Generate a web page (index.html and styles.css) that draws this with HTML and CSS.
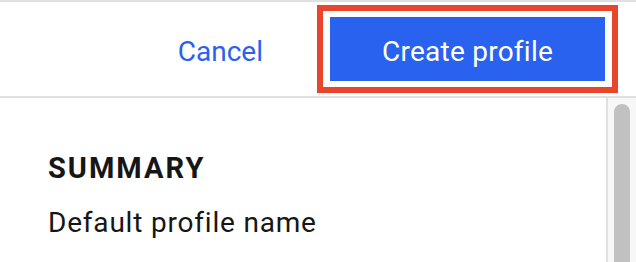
FILE: index.html
```html
<!DOCTYPE html>
<html lang="en">
<head>
<meta charset="utf-8">
<title>Create profile</title>
<link rel="stylesheet" href="styles.css">
</head>
<body>
<div class="page">
  <header class="header">
    <button class="btn-ghost" type="button">Cancel</button>
    <div class="highlight">
      <button class="btn-primary" type="button">Create profile</button>
    </div>
  </header>
  <div class="body">
    <main class="content">
      <h2 class="title">SUMMARY</h2>
      <p class="label">Default profile name</p>
    </main>
    <div class="scrollbar"><div class="thumb"></div></div>
  </div>
</div>
</body>
</html>
```

FILE: styles.css
```css
html, body {
  margin: 0;
  padding: 0;
  background: #ffffff;
}
body {
  font-family: Roboto, "Liberation Sans", sans-serif;
  color: #161616;
}
.page {
  width: 636px;
  height: 262px;
  overflow: hidden;
}
.header {
  box-sizing: border-box;
  height: 98px;
  border-top: 2px solid #e0e0e0;
  border-bottom: 2px solid #e0e0e0;
  display: flex;
  align-items: center;
  justify-content: flex-end;
  padding-right: 18px;
}
.btn-ghost,
.btn-primary {
  box-sizing: border-box;
  height: 64px;
  border: none;
  margin: 0;
  font-family: Roboto, "Liberation Sans", sans-serif;
  font-size: 28px;
  font-weight: 400;
  line-height: 59px;
  padding-top: 5px;
  padding-bottom: 0;
  cursor: pointer;
}
.btn-ghost {
  background: transparent;
  color: #2962ef;
  padding-left: 0;
  padding-right: 0;
  margin-right: 54px;
}
.highlight {
  border: 6px solid #e9442c;
  padding: 6px 7px;
  display: flex;
}
.btn-primary {
  width: 275px;
  background: #2962ef;
  color: #ffffff;
  text-align: center;
  padding-left: 0;
  padding-right: 0;
  letter-spacing: 0.25px;
}
.body {
  display: flex;
  height: 164px;
}
.content {
  flex: 1;
  padding: 52px 0 0 48px;
}
.title {
  margin: 0;
  font-size: 29px;
  font-weight: 700;
  line-height: 36px;
  letter-spacing: 2px;
}
.label {
  margin: 19px 0 0;
  font-size: 28px;
  font-weight: 400;
  line-height: 36px;
  letter-spacing: 0.8px;
}
.scrollbar {
  width: 28px;
  border-left: 2px solid #e0e0e0;
  background: #f7f7f7;
}
.thumb {
  width: 16px;
  height: 220px;
  margin: 6px 0 0 6px;
  border-radius: 8px;
  background: #c1c1c1;
}
```
